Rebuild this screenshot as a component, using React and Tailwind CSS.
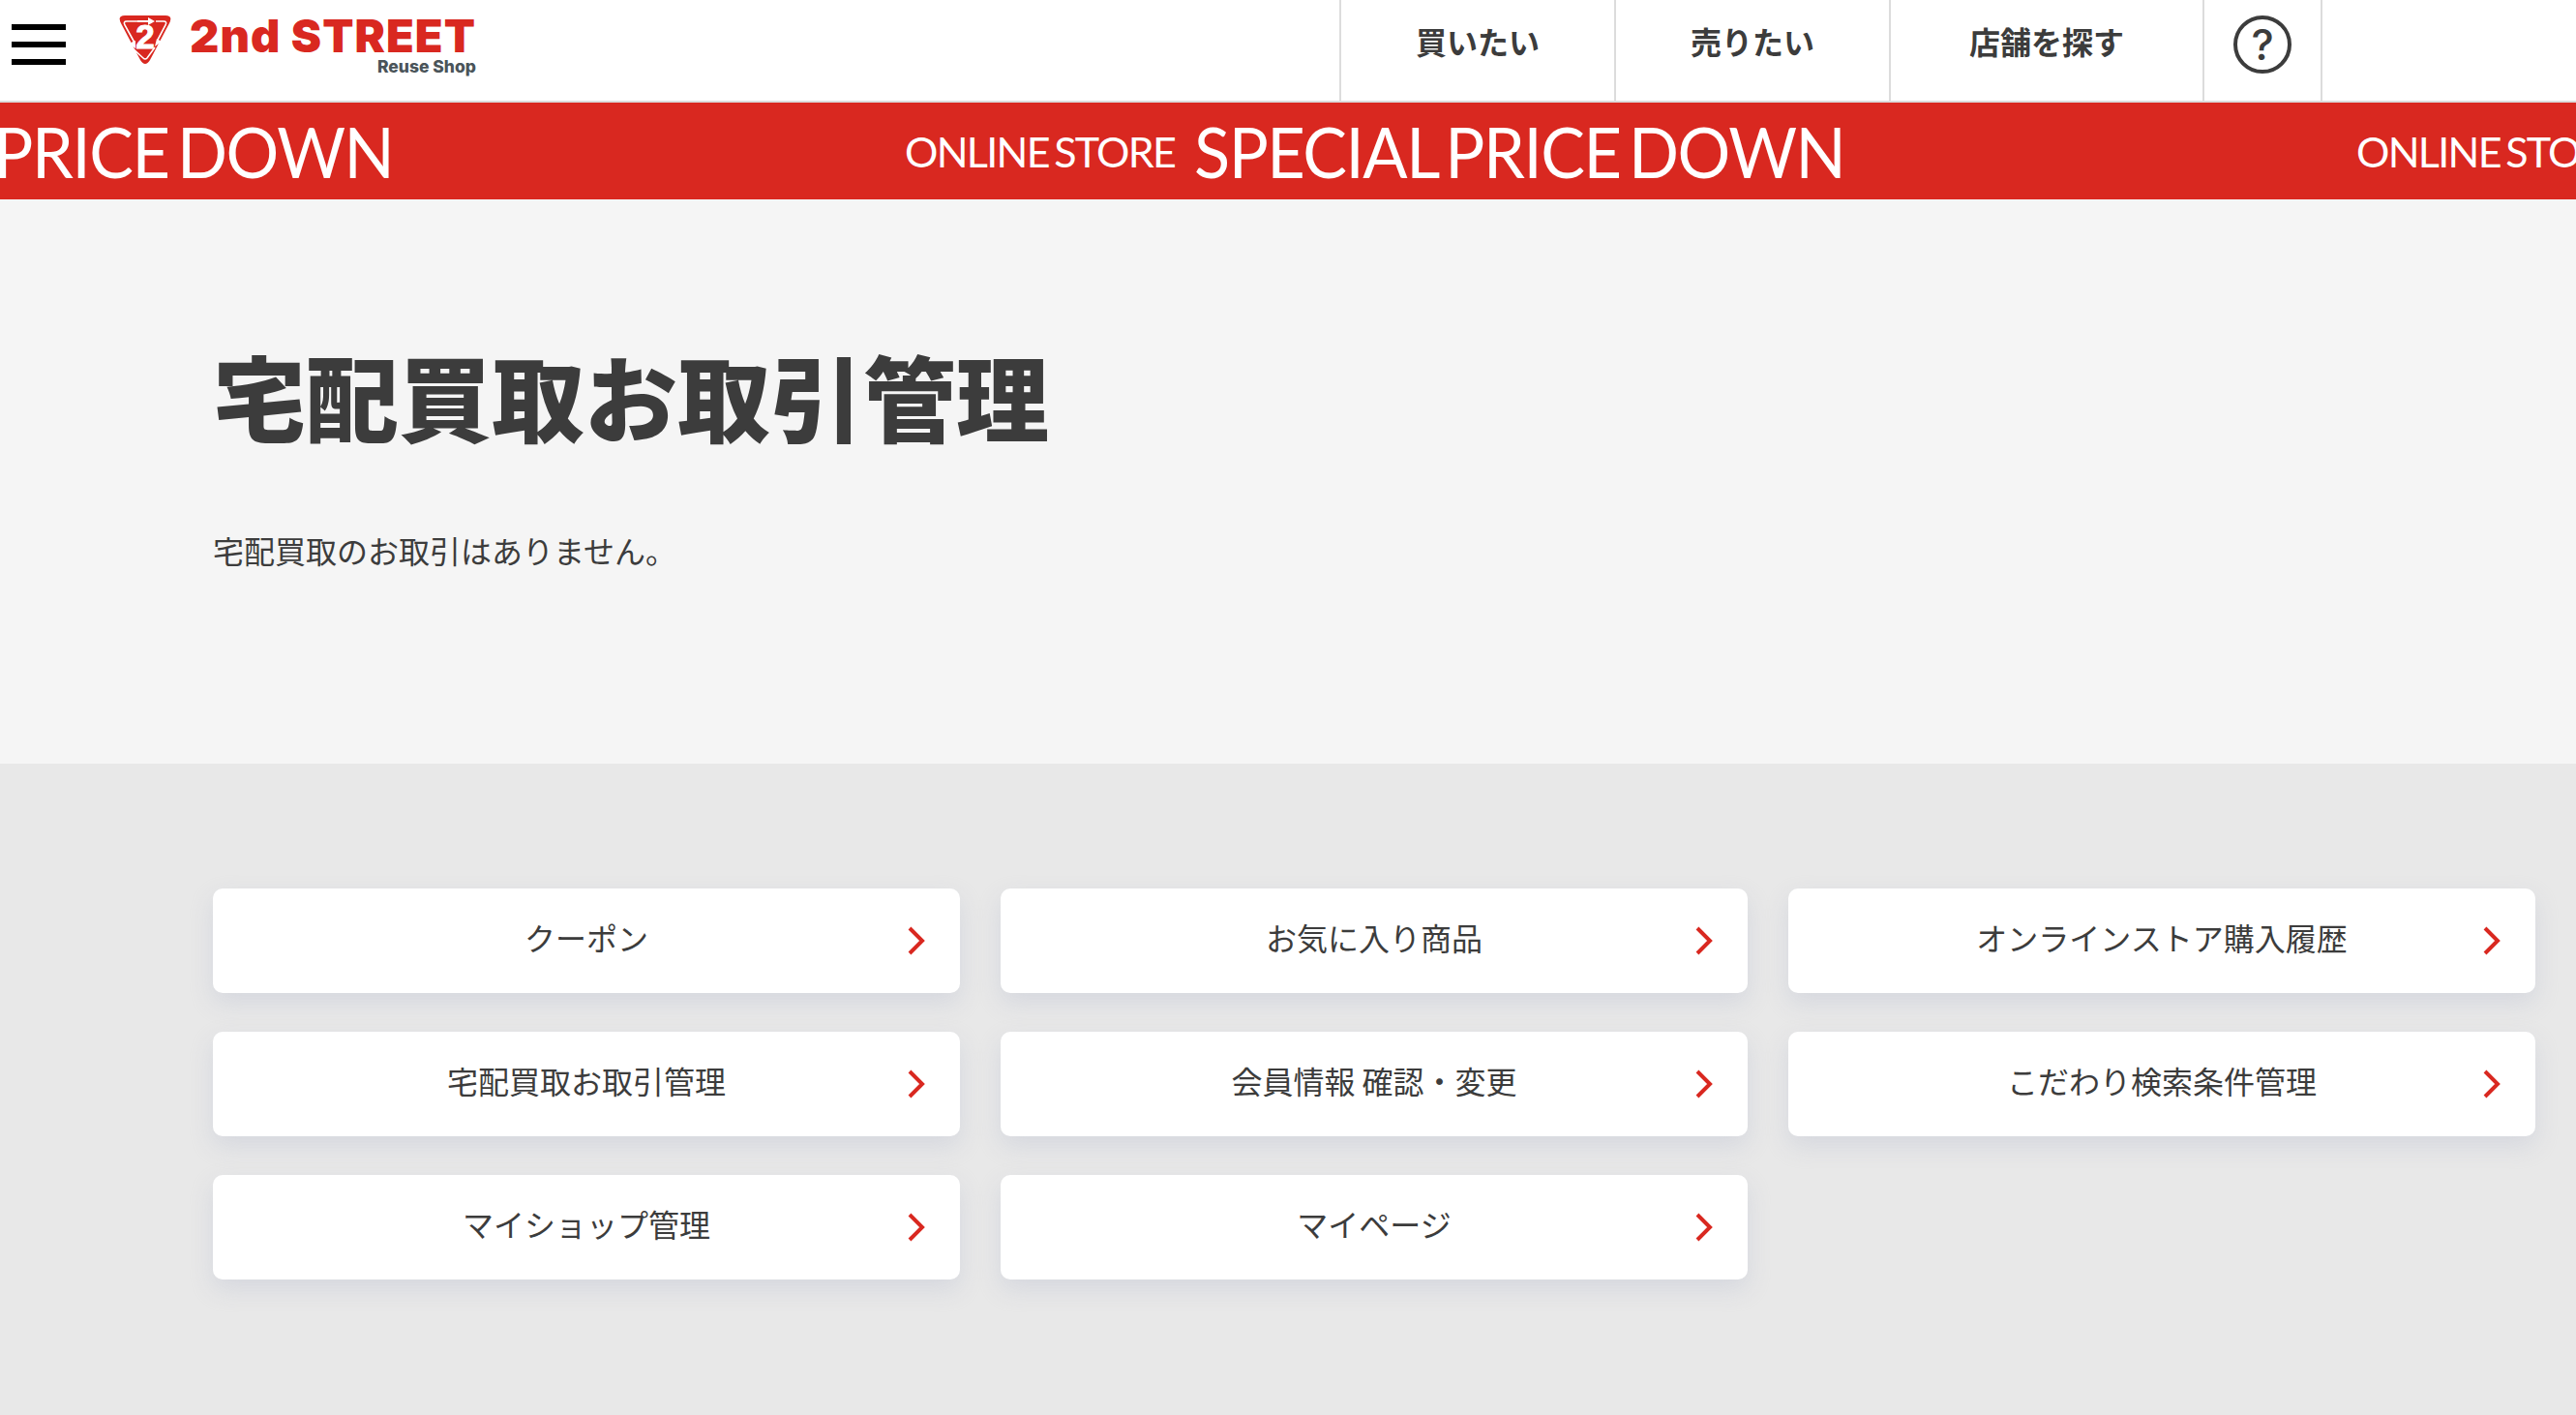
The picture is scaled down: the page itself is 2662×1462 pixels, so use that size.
const cards = [
  'クーポン', 'お気に入り商品', 'オンラインストア購入履歴',
  '宅配買取お取引管理', '会員情報 確認・変更', 'こだわり検索条件管理',
  'マイショップ管理', 'マイページ',
];
const jp = "font-['Noto_Sans_CJK_JP','Noto_Sans',sans-serif]";

function Logo() {
  return (
    <div className="ml-[54px] flex h-full items-start">
      <svg width="56" height="52" viewBox="0 0 56 52" className="mt-[15px] shrink-0">
        <path d="M7 1 H49 Q57 1 53 9 L33 47 Q28 55 23 47 L3 9 Q-1 1 7 1 Z" fill="#d92820" />
        <path d="M22 7 H9 Q5 7 7 11 L17 29 M39 7 H47 Q51 7 49 11 L41 26 M14 34 L26 45 Q28 47 30 45 L38 34" fill="none" stroke="#fff" strokeWidth="1.6" />
        <path d="M20 7 H34" stroke="#fff" strokeWidth="2" />
        <path d="M31 3 L38 7 L31 11 Z M11 30 L18 27 L18 35 Z M38 33 L45 28 L40 25 Z" fill="#fff" />
        <text x="28" y="35" textAnchor="middle" fontFamily="Liberation Sans" fontWeight="700" fontSize="35" fill="#fff" stroke="#fff" strokeWidth="1">2</text>
      </svg>
      <div className="ml-[18px] mt-[14px] flex flex-col items-end">
        <div className="font-['Inter',sans-serif] text-[47px] font-black leading-[46px] tracking-[1.05px] text-[#d92820]">2nd STREET</div>
        <div className="font-['Inter',sans-serif] text-[17.5px] font-extrabold leading-[18px] text-[#4a5459]">Reuse Shop</div>
      </div>
    </div>
  );
}

function Promo() {
  return (
    <div className="flex h-[100px] w-[1500px] shrink-0 items-center text-white">
      <span className="w-[299px] shrink-0 whitespace-nowrap font-['Lato',sans-serif] text-[43px] leading-none tracking-[-1.7px] [word-spacing:-4px]">ONLINE STORE</span>
      <span className="origin-left scale-x-[0.95] whitespace-nowrap font-['Lato',sans-serif] text-[72px] leading-none tracking-[-1.5px] [word-spacing:-8px]">SPECIAL PRICE DOWN</span>
    </div>
  );
}

function Card({ label }) {
  return (
    <a className="relative flex h-[108px] items-center justify-center rounded-[10px] bg-white pb-[8px] text-[32px] leading-[48px] text-[#3c3c3c] shadow-[0_10px_24px_rgba(190,195,210,0.45)]">
      {label}
      <svg width="20" height="30" viewBox="0 0 20 30" className="absolute right-[35px] top-[39px]">
        <path d="M3 2 L16 15 L3 28" fill="none" stroke="#d92820" strokeWidth="4" />
      </svg>
    </a>
  );
}

export default function App() {
  return (
    <div className={`flex min-h-screen flex-col overflow-hidden bg-[#e8e8e8] ${jp}`}>
      <header className="flex h-[106px] shrink-0 border-b-2 border-[#dcdcdc] bg-white">
        <div className="flex w-[1384px] shrink-0">
          <div className="ml-[12px] mt-[25px] flex h-[42px] w-[56px] shrink-0 flex-col justify-between">
            <span className="h-[6px] bg-black" />
            <span className="h-[6px] bg-black" />
            <span className="h-[6px] bg-black" />
          </div>
          <Logo />
        </div>
        <nav className="flex text-[32px] font-bold text-[#3c3c3c]">
          <a className="flex w-[284px] items-center justify-center border-l-2 border-[#dcdcdc] pb-[20px]">買いたい</a>
          <a className="flex w-[284px] items-center justify-center border-l-2 border-[#dcdcdc] pb-[20px]">売りたい</a>
          <a className="flex w-[324px] items-center justify-center border-l-2 border-[#dcdcdc] pb-[20px]">店舗を探す</a>
          <a className="flex w-[124px] items-center justify-center border-x-2 border-[#dcdcdc] pb-[12px]">
            <span className="flex h-[60px] w-[60px] items-center justify-center rounded-full border-[4px] border-[#3c3c3c] font-['Inter',sans-serif] text-[44px] font-medium leading-none">?</span>
          </a>
        </nav>
      </header>

      <div className="h-[100px] shrink-0 overflow-hidden bg-[#d92820]">
        <div className="-ml-[565px] flex w-[4500px]">
          <Promo />
          <Promo />
          <Promo />
        </div>
      </div>

      <section className="h-[583px] shrink-0 bg-[#f5f5f5] px-[220px] pt-[154px] text-[#3c3c3c]">
        <h1 className="text-[96px] font-black leading-[96px]">宅配買取お取引管理</h1>
        <p className="mt-[88px] text-[32px] leading-[48px]">宅配買取のお取引はありません。</p>
      </section>

      <section className="grid grid-cols-[772px_772px_772px] gap-x-[42px] gap-y-[40px] pl-[220px] pt-[129px]">
        {cards.map((c) => <Card key={c} label={c} />)}
      </section>
    </div>
  );
}
